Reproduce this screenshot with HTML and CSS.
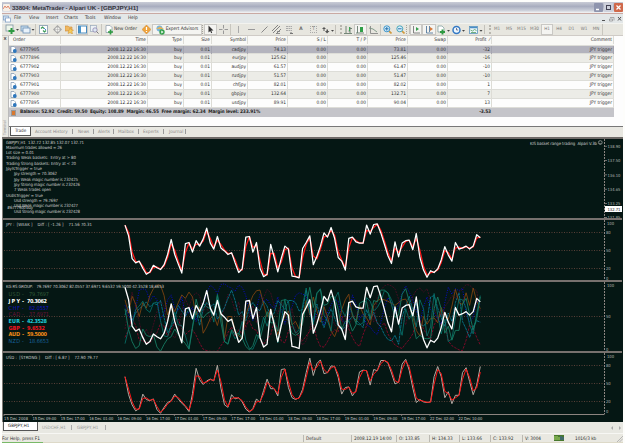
FILE: index.html
```html
<!DOCTYPE html>
<html lang="en">
<head>
    <meta charset="UTF-8">
    <title>33804: MetaTrader - Alpari UK - [GBPJPY,H1]</title>
    <link rel="stylesheet" href="styles.css">
</head>
<body>
<div class="window">
    <div class="titlebar">
        <svg class="app-icon" width="7" height="7" viewBox="0 0 7 7"><rect width="7" height="7" rx="1" fill="#f6efe6"/><path d="M0 5L2 2L3.5 4L5 2L7 5" fill="none" stroke="#e0866a"/></svg>
        <h1>33804: MetaTrader - Alpari UK - [GBPJPY,H1]</h1>
        <div class="window-buttons">
            <span class="win-btn"><svg width="9" height="9"><path d="M2 6.5H5" stroke="#fff" stroke-width="1.5"/></svg></span>
            <span class="win-btn light"><svg width="9" height="9"><rect x="2.5" y="2.5" width="4" height="4" fill="none" stroke="#445"/></svg></span>
            <span class="win-btn close"><svg width="9" height="9"><path d="M2.5 2.5L6.5 6.5M6.5 2.5L2.5 6.5" stroke="#fff" stroke-width="1.2"/></svg></span>
        </div>
    </div>

    <div class="menubar">
        <svg class="menu-icon" width="8" height="8" viewBox="0 0 8 8"><rect x=".5" y="1" width="5" height="4" fill="#cfe0f2" stroke="#7c9cc4" stroke-width=".7"/><rect x="2.5" y="3" width="5" height="4" fill="#fff" stroke="#7c9cc4" stroke-width=".7"/></svg>
        <span class="m-file">File</span><span class="m-view">View</span><span class="m-insert">Insert</span><span class="m-charts">Charts</span><span class="m-tools">Tools</span><span class="m-window">Window</span><span class="m-help">Help</span>
        <svg class="mdi" width="24" height="9" viewBox="0 0 24 9"><path d="M1 6.5H4" stroke="#555"/><path d="M9 3.5h4v3M8.500 5h3v2h-3z" fill="none" stroke="#999" stroke-width=".8"/><path d="M17 3L20 6.500M20 3L17 6.500" stroke="#555"/></svg>
    </div>

    <div class="toolbar">
        <span class="tool w15"><svg width="15" height="11"><rect x="1" y="1" width="7" height="6" fill="#eef5ea" stroke="#8197a5" stroke-width=".8"/><path d="M6.500 4v6M3.500 7h6" stroke="#2f9a42" stroke-width="2"/><path class="caret" d="M11 5h3l-1.500 1.700z"/></svg></span>
        <span class="tool w16 sep"><svg width="15" height="11"><rect x="1" y="2" width="7" height="5" fill="#c9dff0" stroke="#6d8fb3" stroke-width=".8"/><rect x="3" y="4" width="7" height="5" fill="#e8f2fa" stroke="#6d8fb3" stroke-width=".8"/><path class="caret" d="M11.500 5h3l-1.500 1.700z"/></svg></span>
        <span class="tool w15"><svg width="9" height="9"><rect x=".5" y=".5" width="8" height="8" fill="#fff" stroke="#9ab"/><path d="M2 3.500L3.500 2L5 3.500M4 5.500L5.500 7L7 5.500" fill="none" stroke="#3b9a58" stroke-width="1.200"/><path d="M5 3L7 5" stroke="#4889d0"/></svg></span>
        <span class="tool w12"><svg width="9" height="9"><path d="M4.500 0L9 4.500L4.500 9L0 4.500z" fill="#a6a6a6"/><circle cx="4.500" cy="4.500" r="2.300" fill="#f1f1ed"/><path d="M4.500 1v7M1 4.500h7" stroke="#aaa" stroke-width=".5"/></svg></span>
        <span class="tool w13"><svg width="9" height="9"><path d="M0 1h3l1 1h3v4H0z" fill="#efb861" stroke="#c98b3b" stroke-width=".6"/><path d="M5 3l1.200 1.800L8.500 5L7 6.500L7.500 9L5 7.700L3 8.500L3.500 6.500z" fill="#f6cc5d" stroke="#cb8b32" stroke-width=".5"/></svg></span>
        <span class="tool w12 on"><svg width="9" height="9"><rect x=".5" y="1" width="8" height="7" fill="#fff" stroke="#4689bd"/><rect x="1" y="1" width="2" height="7" fill="#4a95cc"/></svg></span>
        <span class="tool w14 sep"><svg width="9" height="9"><rect x=".5" y=".5" width="6" height="6" fill="#edf2f5" stroke="#9ab" stroke-width=".7"/><circle cx="5" cy="5" r="2.200" fill="#dce9f0" stroke="#87a" stroke-width=".7"/><path d="M6.500 6.500L8.500 8.500" stroke="#777"/></svg></span>
        <span class="tool w38"><svg width="9" height="10"><path d="M1 .5h4l2 2v5H1z" fill="#fff" stroke="#8797a8" stroke-width=".7"/><path d="M5.500 4.500v5M3 7h5" stroke="#2f9a42" stroke-width="1.700"/></svg><b class="new-order">New Order</b></span>
        <span class="tool w12"><svg width="9" height="9"><path d="M4.500 0L9 4.500L4.500 9L0 4.500z" fill="#f0a43a" stroke="#c97d2c" stroke-width=".5"/><path d="M4.500 2v3M4.500 6v1" stroke="#fff" stroke-width="1.200"/></svg></span>
        <span class="tool w50 on"><svg width="9" height="10"><circle cx="3.500" cy="3.500" r="3" fill="#78b4dc"/><path d="M0 4L4 1.500L8 4z" fill="#e2b259"/><circle cx="6" cy="7" r="2.700" fill="#35a14c"/><path d="M5.300 5.500v3l2.200-1.500z" fill="#fff"/></svg><b class="expert">Expert Advisors</b></span>
        <span class="grip"></span>
        <span class="tool w13 on"><svg width="7" height="9"><path d="M1.500 .5v7l1.700-1.600l1 2.400l1-.5l-1-2.200H6.500z" fill="#333"/></svg></span>
        <span class="tool w14 sep"><svg width="9" height="9"><path d="M4.500 0v3.500M4.500 5.500V9M0 4.500h3.500M5.500 4.500H9" stroke="#999"/></svg></span>
        <span class="tool w14"><svg width="9" height="9"><path d="M4.500 1v7" stroke="#aaa"/></svg></span>
        <span class="tool w13"><svg width="9" height="9"><path d="M1 4.500h7" stroke="#999"/></svg></span>
        <span class="tool w12"><svg width="9" height="9"><path d="M1.500 7.500L7.500 1.500" stroke="#888"/></svg></span>
        <span class="tool w13"><svg width="9" height="9"><path d="M0 6L6 0M1 8L8 1M4 9L9 4" stroke="#777" stroke-width=".9"/><path d="M5 8.500h3M5 6.500h3" stroke="#777" stroke-width=".8"/></svg></span>
        <span class="tool w12"><svg width="9" height="9"><path d="M1 1.500h6M1 3.500h6M1 5.500h6" stroke="#aaa" stroke-dasharray="2 .5"/><path d="M5 8.500h3M6 7v2" stroke="#777"/></svg></span>
        <span class="tool w12 letter">A</span>
        <span class="tool w13"><i class="label-icon">T</i></span>
        <span class="tool w15"><svg width="14" height="10"><path d="M1 4l2-2l2 2H3.500v2H2.500V4zM4 6l2 2.500L8.500 6H7V4.500H5.500V6z" fill="#555"/><path class="caret" d="M10 5h3l-1.500 1.700z"/></svg></span>
        <span class="grip double"></span>
        <span class="tool w12"><svg width="9" height="9"><path d="M2 1v7M0 8.500h8M6 2v6M6 3.500h2M4.500 6H6" stroke="#667a6c" stroke-width=".9"/><path d="M5.500 2v4" stroke="#3aa250"/></svg></span>
        <span class="tool w13 on"><svg width="9" height="9"><path d="M1.500 1v7M0 8h8" stroke="#667a6c" stroke-width=".9"/><rect x="4" y="2" width="3" height="5" fill="#2f9f48"/></svg></span>
        <span class="tool w14 sep"><svg width="9" height="9"><path d="M1.500 1v7.500H9" fill="none" stroke="#888" stroke-width=".9"/><path d="M0 3L4 4L8 7" fill="none" stroke="#7a9583" stroke-width=".9"/></svg></span>
        <span class="tool w13"><svg width="9" height="9"><path d="M6 6l2.500 2.500" stroke="#d19a3d" stroke-width="1.700"/><circle cx="3.800" cy="3.800" r="3" fill="#d8effb" stroke="#3d94ca"/><path d="M2 3.800h3.600M3.800 2v3.600" stroke="#2672ad"/></svg></span>
        <span class="tool w12"><svg width="9" height="9"><path d="M6 6l2.500 2.500" stroke="#d19a3d" stroke-width="1.700"/><circle cx="3.800" cy="3.800" r="3" fill="#d8effb" stroke="#4ba5b9"/><path d="M2 3.800h3.600" stroke="#2672ad"/></svg></span>
        <span class="grip wide"></span>
        <span class="tool w12 on"><svg width="9" height="9"><path d="M1.500 1v7H8" fill="none" stroke="#777" stroke-width=".9"/><path d="M4 2v4l3-2z" fill="#37a04e"/></svg></span>
        <span class="tool w14 on"><svg width="9" height="9"><path d="M1.500 1v7H8M4.500 1v6" fill="none" stroke="#56799c" stroke-width=".9"/><path d="M5 2v4l3-2z" fill="#d57a3a"/></svg></span>
        <span class="tool w15"><svg width="14" height="10"><path d="M1 1h4l2 2v4H1z" fill="#fff" stroke="#799" stroke-width=".7"/><path d="M5.500 4.500v5M3 7h5" stroke="#2f9a42" stroke-width="1.900"/><path class="caret" d="M10 5h3l-1.500 1.700z"/></svg></span>
        <span class="tool w16"><svg width="14" height="10"><circle cx="4.500" cy="5" r="3.500" fill="#eef8ff" stroke="#3579c5" stroke-width="1.500"/><path d="M4.500 3v2h1.700" fill="none" stroke="#446" stroke-width=".7"/><path class="caret" d="M10 5h3l-1.500 1.700z"/></svg></span>
        <span class="tool w17"><svg width="14" height="10"><rect x=".5" y="1.500" width="8" height="7" fill="#e9f3f9" stroke="#5d94bd" stroke-width=".8"/><path d="M1 2.500h7" stroke="#4a8dc5" stroke-width="1.500"/><path d="M1.500 5l2 1l2-1.500l2 1M2 7.500h5" stroke="#54a061" fill="none" stroke-width=".8"/><path class="caret" d="M10.500 5h3l-1.500 1.700z"/></svg></span>
        <span class="grip double"></span>
        <span class="tool w12 period">M1</span><span class="tool w12 period">M5</span><span class="tool w13 period">M15</span><span class="tool w13 period">M30</span><span class="tool w12 period on">H1</span><span class="tool w12 period">H4</span><span class="tool w13 period">D1</span><span class="tool w12 period">W1</span><span class="tool w13 period sep">MN</span>
    </div>

    <div class="terminal">
        <div class="terminal-side"><b>×</b><span>Terminal</span></div>
        <div class="terminal-main">
            <div class="trades" id="trades">
                <div class="row head"><span>Order</span><span>Time</span><span>Type</span><span>Size</span><span>Symbol</span><span>Price</span><span>S / L</span><span>T / P</span><span>Price</span><span>Swap</span><span>Profit &nbsp;⁄</span><span>Comment</span></div>
            </div>
            <div class="balance"><i></i><b>Balance: 52.92&nbsp; Credit: 59.50&nbsp; Equity: 108.89&nbsp; Margin: 46.55&nbsp; Free margin: 62.34&nbsp; Margin level: 233.91%</b><b class="total">-3.53</b></div>
            <div class="terminal-tabs"><span class="t-trade">Trade</span><span class="t-history">Account History</span><span class="t-news">News</span><span class="t-alerts">Alerts</span><span class="t-mail">Mailbox</span><span class="t-experts">Experts</span><span class="t-journal">Journal</span></div>
        </div>
    </div>

    <div class="charts">
        <svg class="panel" width="619" height="79" viewBox="3 139 619 79">
            <g class="info">
                <text x="6" y="144" textLength="78">GBPJPY,H1&#160; 132.72 132.85 132.07 132.71</text>
                <text x="6" y="148.700" textLength="56">Maximum trades allowed = 26</text>
                <text x="6" y="154" textLength="28">Lot size = 0.01</text>
                <text x="6" y="159.300" textLength="70">Trading Weak baskets:&#160; Entry at &gt; 80</text>
                <text x="6" y="164.700" textLength="70">Trading Strong baskets: Entry at &lt; 20</text>
                <text x="6" y="170" textLength="36">JpyIsTrigger = true</text>
                <text x="14" y="175.200" textLength="43">Jpy strength = 70.3062</text>
                <text x="14" y="180.600" textLength="64">Jpy Weak magic number is 232425</text>
                <text x="14" y="186" textLength="66">Jpy Strong magic number is 232426</text>
                <text x="14" y="191.200" textLength="37">7 Weak trades open</text>
                <text x="6" y="196.500" textLength="37">UsdIsTrigger = true</text>
                <text x="14" y="201.800" textLength="44">Usd strength = 79.7697</text>
                <text x="14" y="207.300" textLength="64">Usd Weak magic number is 232427</text>
                <text x="14" y="212.500" textLength="66">Usd Strong magic number is 232428</text>
                <text x="7" y="208.600" textLength="26">#6777900 buy</text>
                <text x="530" y="144.500" textLength="67">KIS basket range trading&#160; Alpari V.3b</text>
            </g>
            <circle cx="600.300" cy="142.500" r="1.900" class="face"/><path d="M599.300 143.300q1 1 2 0M599.500 141.800v.3M601.100 141.800v.3" class="face"/>
            <g class="scale">
                <text x="607.500" y="148">138.90</text><text x="607.500" y="162.300">137.50</text><text x="607.500" y="176.500">136.10</text><text x="607.500" y="191">134.65</text><text x="607.500" y="205">133.25</text><text x="607.500" y="218.500">131.85</text>
            </g>
            <rect x="605" y="206" width="17" height="6" fill="#fff"/><text x="607.500" y="210.700" class="current">132.71</text>
            <path class="axis" d="M604.500 139V218"/><path class="ticks" d="M604 146.300h3M604 160.500h3M604 174.800h3M604 189.300h3M604 203.500h3M604 217.500h3"/>
        </svg>
        <svg class="panel" width="619" height="60" viewBox="3 220 619 60">
            <path class="level" d="M4 232.500H604M4 250.500H604M4 268.500H604"/>
            <text class="caption" x="6" y="226" textLength="86" xml:space="preserve">JPY :  [WEAK ]    Diff : [ -1.26 ]    71.56 70.31</text>
            <polyline class="signal" id="jpySignal"/><polyline class="jpy" id="jpyLine"/>
            <g class="scale"><text x="607" y="224.800">100</text><text x="606" y="234">80</text><text x="606" y="252">50</text><text x="606" y="270">20</text><text x="606" y="279.500">0</text></g>
            <path class="axis" d="M604.500 220V280"/>
        </svg>
        <svg class="panel" width="619" height="69" viewBox="3 282 619 69">
            <path class="level" d="M4 316.500H604"/>
            <g id="basket"></g>
            <text class="caption" x="6" y="287.700" textLength="158">KG RS GROUP:&#160;&#160; 79.7697 70.3062 82.0557 37.6971 9.6532 59.5000 42.3528 18.6653</text>
            <g class="legend" id="legend"></g>
            <g class="scale"><text x="607" y="287">100</text><text x="606" y="318">50</text><text x="606" y="350.500">0</text></g>
            <path class="axis" d="M604.500 282V351"/>
        </svg>
        <svg class="panel" width="619" height="61" viewBox="3 353 619 61">
            <path class="level" d="M4 365.500H604M4 383.500H604M4 401.500H604"/>
            <text class="caption" x="6" y="359" textLength="92" xml:space="preserve">USD :  [STRONG ]    Diff : [ 6.87 ]    72.90 79.77</text>
            <polyline class="usd" id="usdLine"/><polyline class="signal top" id="usdSignal"/>
            <g class="scale"><text x="607" y="358">100</text><text x="606" y="367">80</text><text x="606" y="385">50</text><text x="606" y="403">20</text><text x="606" y="413">0</text></g>
            <path class="axis" d="M604.500 353V414"/>
        </svg>
        <svg class="time-axis" width="619" height="8" viewBox="3 414 619 8"><path d="M4 414.500H604.500" stroke="#8d8480"/><g id="timeAxis"></g></svg>
    </div>

    <div class="chart-tabs"><span class="active">GBPJPY,H1</span><span class="second">USDCHF,H1</span><span class="third">GBPJPY,H1</span>
        <svg width="14" height="8"><path d="M4 2v4L2 4zM10 2v4L12 4z" fill="#aaa"/></svg>
    </div>
    <div class="statusbar">
        <span class="s-help">For Help, press F1</span><span class="s-default">Default</span><span class="s-time">2008.12.19 14:00</span><span class="s-o">O: 133.85</span><span class="s-h">H: 134.33</span><span class="s-l">L: 133.66</span><span class="s-c">C: 133.92</span><span class="s-v">V: 3004</span>
        <svg class="s-signal" width="10" height="6"><rect width="10" height="6" fill="#48792e"/><path d="M1 1v4M3 1v4M5 2v3" stroke="#a8d86a"/><path d="M7 1v4M9 2v3" stroke="#3b5fa4"/></svg>
        <span class="s-kb">1016/3 kb</span>
        <svg class="s-grip" width="7" height="7"><path d="M1 7L7 1M3.500 7L7 3.500" stroke="#aaa" stroke-width=".8"/></svg>
    </div>
    <div class="taskbar"><i></i></div>
</div>
<script src="script.js"></script>
</body>
</html>
```
FILE: styles.css
```css
* {
    box-sizing: border-box;
}

body {
    margin: 0;
    width: 625px;
    height: 443px;
    overflow: hidden;
    background: #fdfdfb;
    font-family: "DejaVu Sans Condensed", "DejaVu Sans", Tahoma, sans-serif;
    font-size: 4.8px;
    line-height: 1;
    color: #303030;
}

svg {
    display: block;
    flex: none;
}

span, b {
    white-space: nowrap;
}

.window {
    width: 621px;
    margin-left: 2px;
    padding-top: 2px;
    display: flex;
    flex-direction: column;
}

/* title and menu */
.titlebar {
    height: 11px;
    display: flex;
    align-items: center;
    background: linear-gradient(#c9ccd6, #a8adbf 40%, #c9cdd8 75%, #f6f6f6);
}

.app-icon {
    margin-left: 1px;
}

.titlebar h1 {
    margin: 0 0 0 2px;
    font-family: "Liberation Sans", Arial, sans-serif;
    font-size: 6.2px;
    line-height: 8px;
    color: #33343c;
    letter-spacing: -.12px;
}

.window-buttons {
    display: flex;
    gap: 1px;
    margin-left: auto;
}

.win-btn {
    width: 9px;
    height: 9px;
    border-radius: 1px;
    background: #8f95ae;
}

.win-btn.light {
    background: #ced1dc;
}

.win-btn.close {
    background: #d0694a;
}

.menubar {
    height: 10px;
    display: flex;
    align-items: center;
    background: #e3e7e8;
    border-top: 1px solid #c9a9a3;
}

.menu-icon {
    margin-left: 1px;
}

.m-file { width: 15px; margin-left: 3px; }
.m-view { width: 17px; }
.m-insert { width: 18px; }
.m-charts { width: 21px; }
.m-tools { width: 19px; }
.m-window { width: 24px; }

.mdi {
    margin-left: auto;
    margin-right: -2px;
}

/* toolbar */
.toolbar {
    height: 13px;
    padding-left: 3px;
    display: flex;
    align-items: center;
    background: #e7e6df;
    border-top: 1px solid #f3f3ef;
    border-bottom: 1px solid #cfcbc6;
}

.tool {
    flex: none;
    height: 11px;
    display: flex;
    align-items: center;
    justify-content: center;
}

.w12 { width: 12px; }
.w13 { width: 13px; }
.w14 { width: 14px; }
.w15 { width: 15px; }
.w16 { width: 16px; }
.w17 { width: 17px; }
.w38 { width: 38px; }
.w50 { width: 50px; }

.sep {
    border-right: 1px solid #c8c6be;
}

.on {
    background: #f4f4f1;
    border: 1px solid #c9c8c4;
}

.caret {
    fill: #444;
}

.new-order, .expert {
    font-weight: normal;
    font-size: 4.8px;
}

.expert {
    margin-left: 1px;
    letter-spacing: -.08px;
}

.letter {
    font-weight: bold;
    color: #666;
}

.label-icon {
    border: 1px dotted #aaa;
    padding: 0 1px;
    font-style: normal;
    color: #777;
}

.period {
    font-size: 4.6px;
    color: #777;
}

.grip {
    flex: none;
    width: 2px;
    height: 9px;
    border-left: 1px dotted #a5a39c;
}

.grip.double {
    width: 7px;
    border-left: 1px solid #c3c1ba;
    border-right: 2px dotted #b8b6ae;
}

.grip.wide {
    width: 4px;
    border-right: 1px solid #c3c1ba;
}

/* terminal */
.terminal {
    height: 101px;
    display: flex;
}

.terminal-side {
    width: 6px;
    display: flex;
    flex-direction: column;
    justify-content: space-between;
    align-items: center;
    padding: 1px 0 2px;
    background: #e9e8e2;
}

.terminal-side span {
    writing-mode: vertical-rl;
    transform: rotate(180deg);
    font-size: 4px;
    color: #999;
}

.terminal-main {
    width: 615px;
    background: #fdfdfd;
    border-left: 1px solid #bbb;
}

.trades, .balance {
    width: 605px;
}

.row {
    display: grid;
    grid-template-columns: 52px 87px 36px 28px 36px 40px 40px 40px 40px 40px 44px 122px;
    height: 8.95px;
    align-items: center;
    border-bottom: 1px solid #ddddd8;
}

.row > span {
    height: 8px;
    line-height: 8px;
    padding-right: 1px;
    text-align: right;
    border-right: 1px solid #dddcd6;
}

.row > span:first-child {
    display: flex;
    align-items: center;
    gap: 3px;
    padding-left: 1px;
}

.row.head {
    height: 9.500px;
    background: #f9f9f6;
}

.row.head > span:first-child {
    padding-left: 4px;
}

.row.even {
    background: #ececE7;
}

.row.selected {
    background: #b3b3bd;
}

.row.selected > span {
    border-color: #a5a5b0;
}

.balance {
    height: 9px;
    display: flex;
    align-items: center;
    background: #c4c4c9;
    color: #222;
    letter-spacing: -.12px;
}

.balance i {
    width: 5px;
    height: 6px;
    margin: 0 4px 0 2px;
    background: #d8772f;
    border: 1px solid #fff;
    outline: 1px solid #999;
    outline-offset: -1px;
}

.balance .total {
    margin-left: auto;
    margin-right: 123px;
}

.terminal-tabs {
    height: 11px;
    margin-top: 9.400px;
    display: flex;
    align-items: center;
    background: #e8e7e1;
    border-top: 1px solid #777;
    color: #888;
    font-size: 4.600px;
}

.terminal-tabs span {
    height: 8px;
    line-height: 8px;
    margin-bottom: 1px;
    background: linear-gradient(#999, #999) right center / 1px 5px no-repeat;
}

.terminal-tabs .t-trade {
    width: 21px;
    height: 9px;
    margin: -1px 0 0 1px;
    padding-left: 4px;
    background: #fff;
    border: 1px solid #555;
    border-top: 0;
    color: #333;
}

.t-history { width: 42px; padding-left: 4px; }
.t-news { width: 21px; padding-left: 5px; }
.t-alerts { width: 20px; padding-left: 4px; }
.t-mail { width: 25px; padding-left: 4px; }
.t-experts { width: 25px; padding-left: 4px; }
.t-journal { width: 22px; padding-left: 5px; }

/* charts */
.charts {
    height: 285px;
    padding-left: 1px;
    border-top: 2px solid #6e6a67;
    border-left: 1px solid #807b76;
    background: #051714;
}

.charts svg {
    margin-left: -1px;
}

.panel {
    box-sizing: content-box;
    border-bottom: 2px solid #77716e;
}

.panel:nth-child(4) {
    border-bottom: 0;
}

.charts text {
    font-size: 4.300px;
    fill: #c8cac7;
}

.charts .scale text {
    font-size: 4.100px;
    fill: #b5b8b4;
}

.charts .scale text:nth-child(n), .charts .current {
    font-size: 4.100px;
}

.charts .current {
    fill: #111;
}

.charts .legend text {
    font-family: "DejaVu Sans Condensed", sans-serif;
    font-size: 5.500px;
}

.charts .time-axis text {
    font-size: 4px;
}

.face {
    fill: none;
    stroke: #bbb;
    stroke-width: .6;
}

.axis {
    stroke: #8c8581;
    stroke-dasharray: 2 1;
}

.ticks {
    stroke: #8c8581;
    stroke-width: .8;
}

.level {
    stroke: #6c4a40;
    stroke-width: .8;
    stroke-dasharray: 1 1.500;
}

.charts polyline {
    fill: none;
    stroke-linejoin: round;
}

.signal {
    stroke: #ff1414;
    stroke-width: 1.300;
}

.signal.top {
    stroke-width: 1;
}

.jpy {
    stroke: #fff;
    stroke-width: 1.250;
}

.usd {
    stroke: #b3a9a2;
    stroke-width: 1;
}

/* bottom bars */
.chart-tabs {
    height: 11px;
    display: flex;
    align-items: center;
    background: #e8e8e2;
    color: #999;
    font-size: 4.500px;
}

.chart-tabs span {
    line-height: 8px;
}

.chart-tabs .active {
    width: 35px;
    height: 9px;
    margin: -2px 0 0 1px;
    padding-left: 4px;
    background: #fff;
    border: 1px solid #555;
    border-top: 0;
    color: #222;
}

.chart-tabs .second, .chart-tabs .third {
    width: 34px;
    padding-left: 4px;
    background: linear-gradient(#aaa, #aaa) right center / 1px 5px no-repeat;
}

.chart-tabs .third {
    padding-left: 5px;
}

.chart-tabs svg {
    margin-left: auto;
}

.statusbar {
    height: 9px;
    display: flex;
    align-items: center;
    background: #e9e8e1;
    border-top: 1px solid #f7f7f4;
    font-size: 4.700px;
}

.statusbar span {
    line-height: 7px;
    padding-left: 2px;
    border-left: 1px solid #bbb9b2;
}

.statusbar .s-help {
    width: 301px;
    padding-left: 0;
    border: 0;
}

.statusbar .s-default { width: 48px; }
.statusbar .s-time { width: 45px; }
.statusbar .s-o { width: 33px; }
.statusbar .s-h { width: 30px; }
.statusbar .s-l { width: 31px; }
.statusbar .s-c { width: 32px; }
.statusbar .s-v { width: 32px; }

.statusbar .s-kb {
    width: 42px;
    margin-left: 9px;
    border: 0;
}

.s-grip {
    margin-left: auto;
}

.taskbar {
    height: 1px;
    background: #ddd9c8;
}

.taskbar i {
    display: block;
    width: 41px;
    height: 1px;
    background: #79b968;
}
```
FILE: script.js
```js
const trades = [
    ['6777905', 'cadjpy', '74.13', '73.81', '-32'],
    ['6777896', 'eurjpy', '125.62', '125.46', '-16'],
    ['6777902', 'audjpy', '61.57', '61.47', '-10'],
    ['6777903', 'nzdjpy', '51.57', '51.47', '-10'],
    ['6777901', 'chfjpy', '82.01', '82.02', '1'],
    ['6777900', 'gbpjpy', '132.64', '132.71', '7'],
    ['6777895', 'usdjpy', '89.91', '90.04', '13']
];
const orderIcon = '<svg width="7" height="7"><path d="M1 .5h3l1.500 1.500v4.500H1z" fill="#fff" stroke="#7d93ab" stroke-width=".7"/><circle cx="4.800" cy="5" r="1.900" fill="#2d77bd"/></svg>';

trades.forEach((t, i) => {
    const cells = [orderIcon + t[0], '2008.12.22 16:30', 'buy', '0.01', t[1], t[2], '0.00', '0.00', t[3], '0.00', t[4], 'JPY trigger'];
    const row = document.createElement('div');
    row.className = 'row' + (i === 0 ? ' selected' : i % 2 ? ' even' : '');
    row.innerHTML = cells.map(c => `<span>${c}</span>`).join('');
    document.getElementById('trades').appendChild(row);
});

// strength values 0..100, one per bar
const jpy = [92,74,36,29,32,20,10,14,25,21,18,26,43,68,43,27,12,61,63,47,66,57,69,87,62,52,73,54,49,43,46,29,13,19,72,73,47,63,20,6,10,60,38,14,37,57,52,7,6,4,53,63,74,
    26,40,57,79,72,88,70,38,32,17,70,72,64,62,62,92,77,93,94,79,60,41,28,64,39,62,66,67,51,78,38,17,5,16,13,19,34,56,42,32,63,52,54,57,52,57,76,71];
const usd = [61,31,14,4,8,32,23,21,24,6,0,10,18,21,32,24,17,11,3,33,75,56,48,54,57,54,80,42,14,10,31,24,26,19,7,2,8,24,18,38,57,41,41,29,73,74,43,26,23,26,40,68,92,63,83,89,66,68,79,78,60,32,43,44,29,38,69,72,71,47,73,71,88,88,84,67,49,52,82,90,
    72,42,18,23,19,18,19,61,78,61,26,36,16,30,30,68,76,53,31,47,78];
const aud = [74,55,79,68,50,70,62,80,90,95,95,80,52,68,57,70,81,76,85,78,52,64,26,35,47,52,37,57,19,50,50,30,22,19,52,68,80,87,88,68,50,61,42,24,39,51,58,38,43,32,48,73,52,78,58,42,64,50,29,21,35,60,74,82,51,42,66,54,48,38,66,73,75,74,72,69,66,70,74,75,65,50,30,22,50,39,47,48,41,63,50,46,65,89,70,67,84,66,91,72,61];
const eur = [52,65,44,55,61,65,71,64,69,67,73,48,27,35,45,66,58,50,62,45,58,37,61,70,64,68,46,54,63,76,88,73,52,57,44,63,70,62,58,72,65,48,55,73,67,60,73,73,70,58,60,88,60,42,68,48,34,50,61,48,36,30,36,44,50,45,40,34,60,45,56,41,35,24,17,15,23,10,50,65,79,58,70,39,36,43,78,80,62,48,36,55,43,70,84,43,32,20,35,44,42];
const nzd = [11,32,38,60,65,72,60,56,69,71,44,22,21,38,56,38,37,22,4,36,57,48,69,64,61,42,82,58,14,11,29,18,24,43,16,4,3,15,28,49,36,51,45,12,43,75,72,40,26,31,66,91,55,38,84,90,52,44,29,75,85,60,50,67,54,40,38,41,77,72,58,63,72,87,84,74,61,40,23,61,46,56,35,74,61,22,35,83,53,25,46,14,18,48,75,74,62,38,25,54,80];
const chf = [66,52,42,61,88,90,88,72,80,74,45,55,74,81,62,58,79,51,56,64,43,61,67,84,95,91,83,96,97,93,91,86,95,92,80,57,44,61,82,71,75,66,62,78,60,39,56,64,80,84,82,80,52,43,54,61,37,55,67,75,72,48,39,44,81,68,46,54,38,35,28,24,42,62,77,70,54,67,83,94,85,74,58,42,64,78,60,55,47,39,70,92,82,90,87,91,54,42,49,73,67];
const cad = [32,61,85,63,43,18,32,21,38,57,73,64,38,25,19,31,59,75,63,79,84,80,56,68,42,55,73,48,61,82,75,58,71,40,31,53,66,41,60,77,89,84,65,54,72,56,40,62,31,21,9,15,33,59,42,50,65,41,52,38,34,48,26,39,47,51,64,59,71,58,42,78,88,94,96,94,90,75,50,38,61,79,88,91,85,90,73,62,48,36,64,71,80,76,85,89,96,95,90,87,56];
const gbp = [20,31,48,37,16,15,13,12,20,27,40,36,22,31,41,46,33,24,29,31,23,12,3,1,0,0,0,8,15,27,35,22,31,25,38,44,32,30,18,10,18,24,43,33,15,12,29,36,28,20,15,22,29,40,18,7,6,14,25,31,28,48,52,32,20,11,7,24,37,48,53,40,35,41,25,16,9,6,4,11,17,25,41,45,32,24,17,38,47,55,40,15,8,5,2,1,16,38,33,20,9];

// builds the polyline for a panel whose 100 and 0 lie at the given y
function plot(values, top, bottom) {
    return values.map((v, i) => {
        const x = 125 + i * 3.553;
        return x.toFixed(1) + ',' + (bottom - v * (bottom - top) / 100).toFixed(1);
    }).join(' ');
}

function smooth(values) {
    return values.map((v, i) => i ? v * 0.7 + values[i - 1] * 0.3 : v);
}

document.getElementById('jpyLine').setAttribute('points', plot(jpy, 220.3, 280.3));
document.getElementById('jpySignal').setAttribute('points', plot(smooth(jpy), 220.3, 280.3));
document.getElementById('usdLine').setAttribute('points', plot(usd, 353.3, 413.3));
document.getElementById('usdSignal').setAttribute('points', plot(smooth(usd), 353.3, 413.3));

const basket = [
    [cad, '#4f0b25', .8, '2 1'],
    [chf, '#0808e0', .9, '1 1.5'],
    [gbp, '#98062c', .8, '2.5 1.2'],
    [eur, '#077f99', .8, '3 .6'],
    [aud, '#8a4810', .8, ''],
    [nzd, '#08756d', .8, ''],
    [usd, '#167a62', .9, ''],
    [jpy, '#ffffff', 1.3, '']
];
document.getElementById('basket').innerHTML = basket.map(([v, color, w, dash]) =>
    `<polyline points="${plot(v, 281.7, 351.3)}" stroke="${color}" stroke-width="${w}" stroke-dasharray="${dash}"/>`).join('');

const legend = [
    ['USD', '79.7697', '#315c38', 0],
    ['JPY', '70.3062', '#ffffff', 1],
    ['CHF', '82.0557', '#1111cf', 0],
    ['CAD', '37.6971', '#6b1238', 0],
    ['EUR', '42.3528', '#20cbd8', 1],
    ['GBP', '9.6532', '#f01420', 1],
    ['AUD', '59.5000', '#f08b18', 1],
    ['NZD', '18.6653', '#16609a', 0]
];
document.getElementById('legend').innerHTML = legend.map(([name, value, color, bold], i) => {
    const y = (296.3 + i * 6.67).toFixed(1);
    const style = `style="fill:${color};font-weight:${bold ? 'bold' : 'normal'}"`;
    return `<text x="8.5" y="${y}" textLength="11.5" ${style}>${name}</text><text x="22" y="${y}" ${style}>-</text><text x="${bold ? 27 : 29}" y="${y}" textLength="${name === 'GBP' ? 18 : 20}" ${style}>${value}</text>`;
}).join('');

const times = ['15 Dec 2008', '15 Dec 09:00', '15 Dec 17:00', '16 Dec 01:00', '16 Dec 09:00', '16 Dec 17:00', '17 Dec 01:00', '17 Dec 09:00', '17 Dec 17:00',
    '18 Dec 01:00', '18 Dec 09:00', '18 Dec 17:00', '19 Dec 01:00', '19 Dec 09:00', '19 Dec 17:00', '22 Dec 02:00', '22 Dec 10:00'];
document.getElementById('timeAxis').innerHTML = times.map((t, i) => {
    const x = (4 + i * 28.4).toFixed(1);
    return `<path d="M${x} 414v2" stroke="#8d8480" stroke-width=".8"/><text x="${x}" y="420" textLength="24">${t}</text>`;
}).join('');
```
